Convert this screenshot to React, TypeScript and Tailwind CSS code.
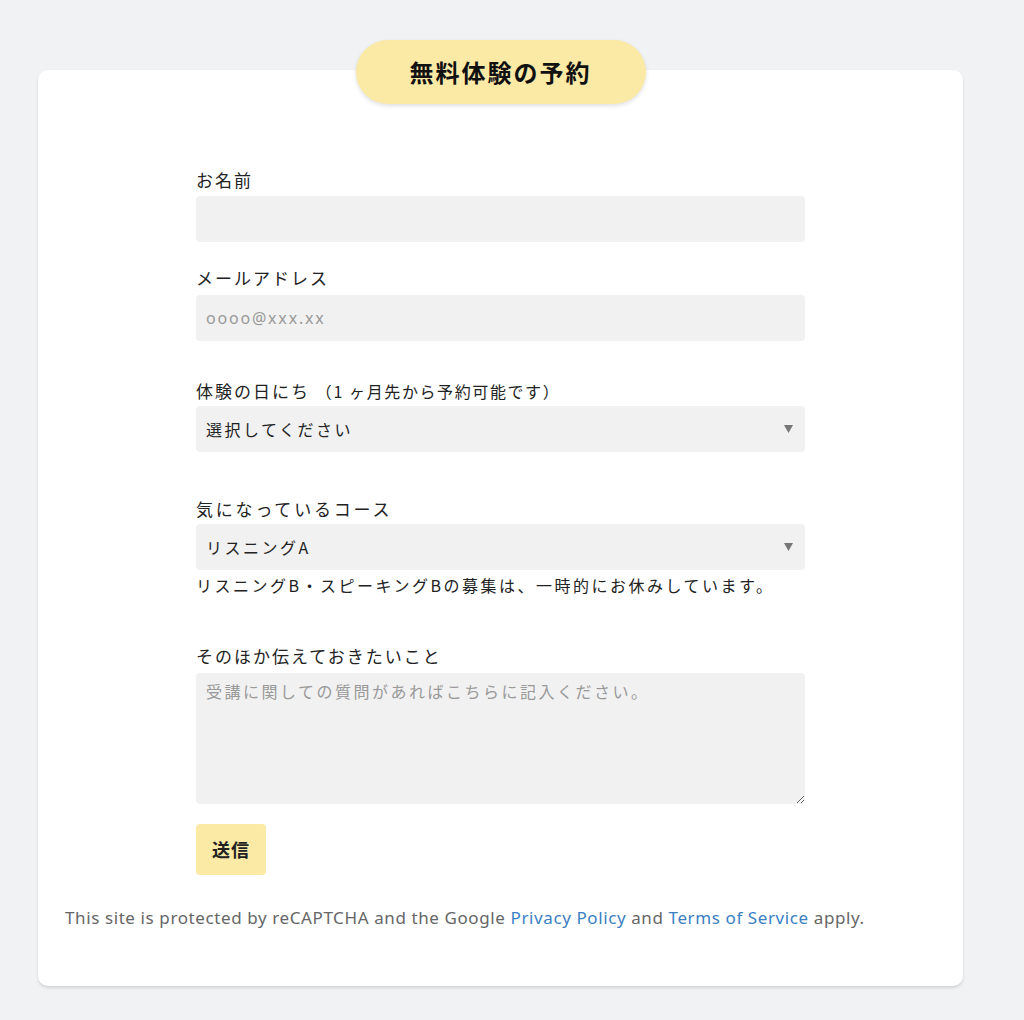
import React from 'react'

const font = {fontFamily: '"Noto Sans CJK JP", "Noto Sans", sans-serif'}
const latin = {fontFamily: '"Noto Sans", "Noto Sans CJK JP", sans-serif'}

function Label({children}: {children: React.ReactNode}) {
  return <div className="text-[17px] leading-6 tracking-[2px] text-[#222]">{children}</div>
}

function Select({value}: {value: string}) {
  return (
    <div className="relative mt-[3px]">
      <select
        defaultValue={value}
        className="w-full h-[46px] rounded-[4px] bg-[#f1f1f1] pl-[10px] pr-8 text-[16px] tracking-[2.5px] text-[#222] appearance-none outline-none"
        style={font}
      >
        <option>{value}</option>
      </select>
      <svg className="absolute right-[12px] top-[19px] pointer-events-none" width="9" height="8" viewBox="0 0 9 8">
        <path d="M0 0 H9 L4.5 8 Z" fill="#777"/>
      </svg>
    </div>
  )
}

export default function App() {
  return (
    <div className="min-h-[1020px] bg-[#f1f2f4] pt-[70px] pb-[35px]" style={font}>
      <div className="ml-[38px] w-[925px] rounded-[10px] bg-white shadow-[0_2px_3px_rgba(0,0,0,0.12)] pb-[56px]">
        <div className="flex justify-center">
          <div className="-mt-[30px] flex h-[64px] w-[290px] items-center justify-center rounded-full bg-[#fbe9a6] shadow-[0_2px_4px_rgba(0,0,0,0.12)]">
            <span className="text-[24px] font-bold tracking-[2px] text-[#111]">無料体験の予約</span>
          </div>
        </div>

        <form className="mx-auto w-[609px]" onSubmit={(e) => e.preventDefault()}>
          <div className="mt-[64px]">
            <Label>お名前</Label>
            <input className="mt-1 w-full h-[46px] rounded-[4px] bg-[#f1f1f1] px-[10px] text-[16px] outline-none" style={font}/>
          </div>

          <div className="mt-[24px]">
            <Label>メールアドレス</Label>
            <input
              className="mt-[5px] w-full h-[46px] rounded-[4px] bg-[#f1f1f1] px-[10px] text-[16px] tracking-[1.8px] outline-none placeholder:text-[#999]"
              placeholder="oooo@xxx.xx"
              style={latin}
            />
          </div>

          <div className="mt-[38px]">
            <Label>体験の日にち <span className="text-[16px] tracking-[1.6px]">（1 ヶ月先から予約可能です）</span></Label>
            <Select value="選択してください"/>
          </div>

          <div className="mt-[45px]">
            <Label><span className="tracking-[2.8px]">気になっているコース</span></Label>
            <Select value="リスニングA"/>
            <div className="mt-[3px] text-[16px] leading-6 tracking-[2.5px] text-[#222]">
              リスニングB・スピーキングBの募集は、一時的にお休みしています。
            </div>
          </div>

          <div className="mt-[47px]">
            <Label>そのほか伝えておきたいこと</Label>
            <textarea
              className="mt-[5px] block w-full h-[131px] rounded-[4px] bg-[#f1f1f1] px-[10px] py-[6px] text-[16px] tracking-[2.5px] outline-none placeholder:text-[#999]"
              placeholder="受講に関しての質問があればこちらに記入ください。"
              style={font}
            />
          </div>

          <button
            type="submit"
            className="mt-[20px] h-[51px] w-[70px] rounded-[4px] bg-[#fbe9a6] text-[18px] font-bold tracking-[1px] text-[#222]"
            style={font}
          >
            送信
          </button>
        </form>

        <p className="mt-[31px] pl-[27px] text-[17px] leading-6 tracking-[0.6px] text-[#666]" style={latin}>
          This site is protected by reCAPTCHA and the Google{' '}
          <a href="#" className="text-[#3b7fc4]">Privacy Policy</a> and{' '}
          <a href="#" className="text-[#3b7fc4]">Terms of Service</a> apply.
        </p>
      </div>
    </div>
  )
}
